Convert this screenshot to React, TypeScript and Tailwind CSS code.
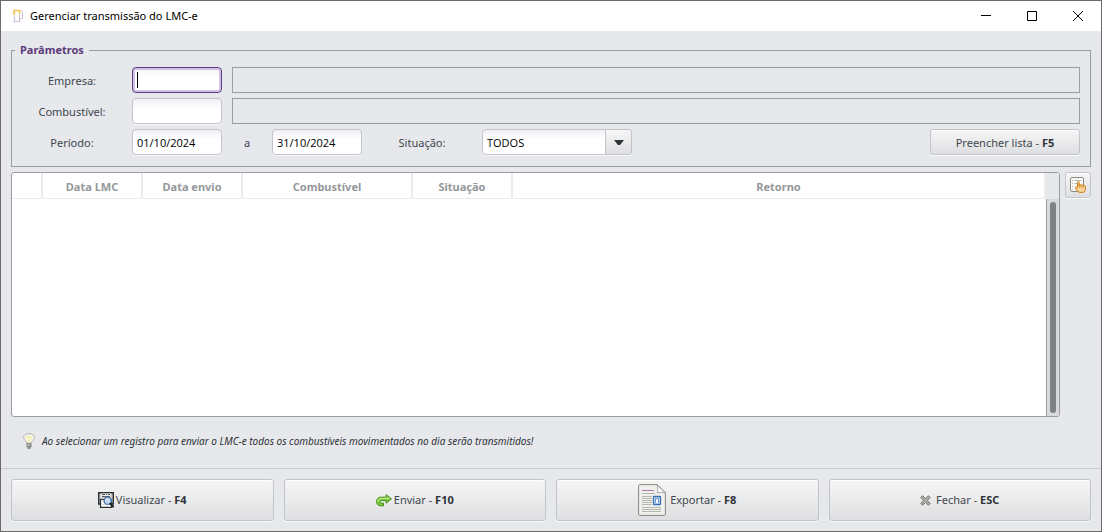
import type { ReactNode } from "react";

const fieldClass =
  "h-[26px] w-[90px] rounded border border-[#c2c4cc] bg-linear-to-b from-[#f1f1f3] to-white to-40% px-1 pt-px text-[11px] text-black shadow-[0_1px_0_#f8f8fa] outline-none";
const readOnlyClass = "h-[26px] min-w-0 flex-1 border border-[#9c9da0] bg-transparent px-1 text-[11px] outline-none";
const buttonClass =
  "flex items-center justify-center rounded-[3px] border border-[#c2c4cc] bg-linear-to-b from-[#f6f6f6] to-[#dedfe1] text-[#41474d] shadow-[0_1px_0_#fbfbfc,inset_0_1px_0_#ffffff]";
const labelClass = "w-[120px] shrink-0 pt-px text-center";

const columns = [
  { title: "", width: "w-[31px]" },
  { title: "Data LMC", width: "w-[100px]" },
  { title: "Data envio", width: "w-[100px]" },
  { title: "Combustível", width: "w-[170px]" },
  { title: "Situação", width: "w-[100px]" },
  { title: "Retorno", width: "" },
];

function PumpIcon() {
  return (
    <svg width="12" height="14" viewBox="0 0 12 14" fill="none" aria-hidden="true">
      <path d="M2.5 11V1.5H7.5V11" stroke="#ebe2ef" strokeWidth="1.4" />
      <path d="M2 6V1.5H7.5V5" stroke="#f8c64e" strokeWidth="1.5" />
      <path d="M1 12.5H8.5M2.5 8V12M7.5 6V12" stroke="#cfc0d8" />
      <path d="M9 1L10.5 3V9.5H8.5" stroke="#ccbbd6" />
    </svg>
  );
}

function ListHandIcon() {
  return (
    <svg width="16" height="16" viewBox="0 0 16 16" fill="none" aria-hidden="true">
      <rect x="0.5" y="0.5" width="13" height="14" rx="1.5" fill="#f9faf8" stroke="#898d88" />
      <path d="M2 3.5H3M4.5 3.5H11.5M2 6.5H3M4.5 6.5H7M2 9.5H3M4.5 9.5H5M2 12.5H3" stroke="#b9bdb8" />
      <path
        d="M7.5 10.8V5.4C7.5 4.2 9.2 4.2 9.2 5.4V8.2C9.4 7.2 11 7.3 11.1 8.4C11.4 7.5 12.9 7.7 13 8.8C13.4 8.1 15.3 8.2 15.3 9.5V12.6C15.3 14.5 14.1 15.4 12.3 15.4H9.8C8.2 15.4 7.2 13.6 5.5 11.7C4.7 10.5 6 9.4 7.5 10.8Z"
        fill="#fbd59a"
        stroke="#c97b12"
      />
      <path d="M9.4 8V10.5M11.2 8.5V10.5M13.1 9V10.8" stroke="#c97b12" strokeWidth="0.8" />
    </svg>
  );
}

function BulbIcon() {
  return (
    <svg width="12" height="16" viewBox="0 0 12 16" fill="none" aria-hidden="true">
      <path
        d="M3.6 10C3.5 8 0.6 7.2 0.6 4.4C0.6 1.8 2.8 0.6 6 0.6S11.4 1.8 11.4 4.4C11.4 7.2 8.5 8 8.4 10Z"
        fill="#f4f4ec"
        stroke="#b4b5b2"
      />
      <path d="M2 4C3.5 3 8.5 3 10 4L7.5 7V9.5H4.5V7Z" fill="#f5edae" />
      <path d="M3.5 4.5L5 6.5L6 5L7 6.5L8.5 4.5" stroke="#fffce0" strokeWidth="0.8" />
      <path d="M3.4 10.2H8.6V13.5L7.4 15.5H4.6L3.4 13.5Z" fill="#a6a7a4" />
      <path d="M3.4 11H8.6M3.6 13.2H8.4M4.8 15.2H7.2" stroke="#62645f" strokeWidth="0.8" />
      <path d="M4.5 12H6.5" stroke="#ecece8" />
    </svg>
  );
}

function PreviewIcon() {
  return (
    <svg width="16" height="16" viewBox="0 0 16 16" fill="none" aria-hidden="true">
      <path d="M0.7 0.7H15.3V12H0.7Z" fill="#c8cbc8" stroke="#2b3033" strokeWidth="1.4" />
      <path d="M3 1.5H13V5H3Z" fill="#e9ebe9" />
      <path d="M4 2.5H7M8 2.5H9M10 2.5H12M4 4.5H12" stroke="#555a5c" />
      <path d="M2.5 7.5H13.5V15.3H2.5Z" fill="#fff" stroke="#2b3033" strokeWidth="1.2" />
      <path d="M4 9.5H7M4 12.5H8" stroke="#dfe1df" />
      <circle cx="9.7" cy="8.8" r="3.6" fill="#c6dcf1" stroke="#4e78ae" strokeWidth="1.4" />
      <path d="M7.8 8C8.3 6.7 9.5 6.3 10.5 6.6" stroke="#fff" />
      <path d="M12.5 11.7L15 14.5" stroke="#1f2427" strokeWidth="2.2" strokeLinecap="round" />
    </svg>
  );
}

function SendIcon() {
  return (
    <svg width="16" height="13" viewBox="0 0 16 13" fill="none" aria-hidden="true">
      <path
        d="M7.5 11.8H4.4C2 11.8 0.6 9.8 0.6 7.4C0.6 4.8 2.4 3.2 4.8 3.2H10.2V0.7L15.4 4.9L10.2 9.2V6.6H5.2C3.8 6.6 3.6 9 5 9.2H7.5Z"
        fill="#7fc93c"
        stroke="#3f8f12"
      />
      <path d="M2 8C1.8 5.5 3.2 4.4 5 4.4H11.3V3.2L13.5 5" stroke="#d3f2a8" strokeWidth="0.9" />
    </svg>
  );
}

function ExportIcon() {
  return (
    <svg width="28" height="32" viewBox="0 0 28 32" fill="none" aria-hidden="true">
      <path
        d="M2 0.6H19.2L27.4 8.8V30C27.4 31 27 31.4 26 31.4H2C1 31.4 0.6 31 0.6 30V2C0.6 1 1 0.6 2 0.6Z"
        fill="#eff0ec"
        stroke="#858882"
      />
      <path d="M19.2 0.8C20 4 20 7 19.2 9C22 8.2 25 8.2 27.2 9Z" fill="#fff" stroke="#8f928c" strokeWidth="0.8" />
      <path d="M4 6.5H16" stroke="#b27bae" />
      <path
        d="M4 9.5H17M4 12.5H14M4 14.5H14M4 16.5H14M4 18.5H14M4 20.5H14M4 23.5H23M4 25.5H23M4 27.5H23"
        stroke="#b4b7ae"
      />
      <rect x="15.5" y="12.5" width="7" height="8" rx="0.5" fill="#c9ddf3" stroke="#3b70b0" strokeWidth="1.3" />
      <path d="M17.5 19V14.5H20.5V19" fill="#f5f9fd" stroke="#6f98cb" />
    </svg>
  );
}

function CloseMarkIcon() {
  return (
    <svg width="11" height="11" viewBox="0 0 11 11" aria-hidden="true">
      <path
        d="M2.5 0.7L5.5 3.5L8.5 0.7L10.3 2.5L7.5 5.5L10.3 8.5L8.5 10.3L5.5 7.5L2.5 10.3L0.7 8.5L3.5 5.5L0.7 2.5Z"
        fill="#a9aba6"
        stroke="#7c7f7a"
      />
    </svg>
  );
}

function ActionButton({ icon, text, shortcut, gap }: { icon: ReactNode; text: string; shortcut: string; gap: string }) {
  return (
    <button type="button" className={`${buttonClass} h-[42px] ${gap}`}>
      {icon}
      <span>
        {text} - <b className="text-[#2e3338]">{shortcut}</b>
      </span>
    </button>
  );
}

export default function App() {
  return (
    <div className="flex min-h-screen flex-col border border-[#6b6b6c] bg-[#e6e8ec] font-['Noto_Sans',sans-serif] text-[11px] leading-4 text-[#41474d]">
      <header className="flex h-[30px] items-center bg-white pl-[11px] text-black">
        <PumpIcon />
        <h1 className="ml-[6px] flex-1">Gerenciar transmissão do LMC-e</h1>
        <button type="button" aria-label="Minimizar" className="flex h-full w-[46px] items-center justify-center">
          <svg width="10" height="10" viewBox="0 0 10 10" stroke="#000">
            <path d="M0 4.5H10" />
          </svg>
        </button>
        <button type="button" aria-label="Maximizar" className="flex h-full w-[46px] items-center justify-center">
          <svg width="10" height="10" viewBox="0 0 10 10" stroke="#000" fill="none">
            <path d="M0.5 0.5H9.5V9.5H0.5Z" />
          </svg>
        </button>
        <button type="button" aria-label="Fechar janela" className="flex h-full w-[46px] items-center justify-center">
          <svg width="10" height="10" viewBox="0 0 10 10" stroke="#000">
            <path d="M0 0L10 10M10 0L0 10" />
          </svg>
        </button>
      </header>

      <main className="flex flex-1 flex-col px-[10px] pt-[10px]">
        <fieldset className="border border-[#9c9da0] pr-[10px] pb-[11px]">
          <legend className="ml-[3px] px-[5px] leading-[18px] font-bold text-[#5b3a78]">Parâmetros</legend>
          <div className="flex flex-col gap-[5px] pt-2">
            <div className="flex items-center">
              <label htmlFor="empresa" className={labelClass}>
                Empresa:
              </label>
              <div className="relative mr-[10px] flex">
                <input
                  id="empresa"
                  type="text"
                  className="h-[26px] w-[90px] rounded border border-[#5f3f7e] bg-linear-to-b from-[#f4f4f6] to-white to-40% px-1 text-[11px] text-black caret-transparent inset-ring-2 inset-ring-[#d3c0e6] outline-none"
                />
                <span className="pointer-events-none absolute top-[5px] left-[5px] h-4 w-px bg-black" />
              </div>
              <input aria-label="Nome da empresa" readOnly className={readOnlyClass} />
            </div>
            <div className="flex items-center">
              <label htmlFor="combustivel" className={labelClass}>
                Combustível:
              </label>
              <input id="combustivel" type="text" className={`${fieldClass} mr-[10px]`} />
              <input aria-label="Nome do combustível" readOnly className={readOnlyClass} />
            </div>
            <div className="flex items-center">
              <label htmlFor="inicio" className={labelClass}>
                Período:
              </label>
              <input id="inicio" type="text" defaultValue="01/10/2024" className={`${fieldClass} font-['Open_Sans',sans-serif]`} />
              <label htmlFor="fim" className="w-[50px] pt-px text-center">
                a
              </label>
              <input id="fim" type="text" defaultValue="31/10/2024" className={`${fieldClass} font-['Open_Sans',sans-serif]`} />
              <label htmlFor="situacao" className={labelClass}>
                Situação:
              </label>
              <div className="relative flex">
                <select
                  id="situacao"
                  className="h-[26px] w-[150px] appearance-none rounded border border-[#c2c4cc] bg-linear-to-b from-[#f1f1f3] to-white to-40% px-1 pt-px font-['Open_Sans',sans-serif] text-[11px] text-black shadow-[0_1px_0_#f8f8fa] outline-none"
                >
                  <option>TODOS</option>
                </select>
                <span className="pointer-events-none absolute inset-y-0 right-0 flex w-[27px] items-center justify-center rounded-r-[3px] border border-[#c2c4cc] bg-linear-to-b from-[#f6f6f6] to-[#dedfe1]">
                  <svg width="10" height="5" viewBox="0 0 10 5" aria-hidden="true">
                    <path d="M0 0H10L6 5H4Z" fill="#2e3338" />
                  </svg>
                </span>
              </div>
              <button type="button" className={`${buttonClass} ml-auto h-[26px] w-[150px]`}>
                <span className="pt-px">
                  Preencher lista - <b className="text-[#2e3338]">F5</b>
                </span>
              </button>
            </div>
          </div>
        </fieldset>

        <section className="mt-[5px] flex flex-1 items-start gap-[5px]">
          <div className="flex flex-1 self-stretch overflow-hidden rounded-[3px] border border-[#9c9da0] bg-white">
            <div className="min-w-0 flex-1">
              <table className="w-full table-fixed border-separate border-spacing-0">
                <thead>
                  <tr>
                    {columns.map((column, index) => (
                      <th
                        key={index}
                        scope="col"
                        className={`h-[26px] border-r-2 border-b border-[#ececec] p-0 pt-[2px] text-center font-bold text-[#94989a] ${column.width}`}
                      >
                        {column.title}
                      </th>
                    ))}
                  </tr>
                </thead>
                <tbody />
              </table>
            </div>
            <div className="flex w-[13px] flex-col">
              <div className="h-[26px] bg-[#e6e8ec]" />
              <div className="flex flex-1 justify-center border-l border-[#9c9da0] bg-[#d8d9da] py-[3px]">
                <div className="w-[6px] rounded-full bg-[#7d8283]" />
              </div>
            </div>
          </div>
          <button type="button" aria-label="Selecionar registros" className={`${buttonClass} size-[26px]`}>
            <ListHandIcon />
          </button>
        </section>

        <p className="flex h-[51px] items-center gap-[7px] pb-1 pl-3 text-[10px] text-[#2e3338] italic">
          <BulbIcon />
          Ao selecionar um registro para enviar o LMC-e todos os combustíveis movimentados no dia serão transmitidos!
        </p>
      </main>

      <footer className="grid grid-cols-4 gap-[10px] border-t border-[#c9cbd0] px-[10px] py-[10px]">
        <ActionButton icon={<PreviewIcon />} text="Visualizar" shortcut="F4" gap="gap-[2px]" />
        <ActionButton icon={<SendIcon />} text="Enviar" shortcut="F10" gap="gap-[2px]" />
        <ActionButton icon={<ExportIcon />} text="Exportar" shortcut="F8" gap="gap-1" />
        <ActionButton icon={<CloseMarkIcon />} text="Fechar" shortcut="ESC" gap="gap-[5px]" />
      </footer>
    </div>
  );
}
